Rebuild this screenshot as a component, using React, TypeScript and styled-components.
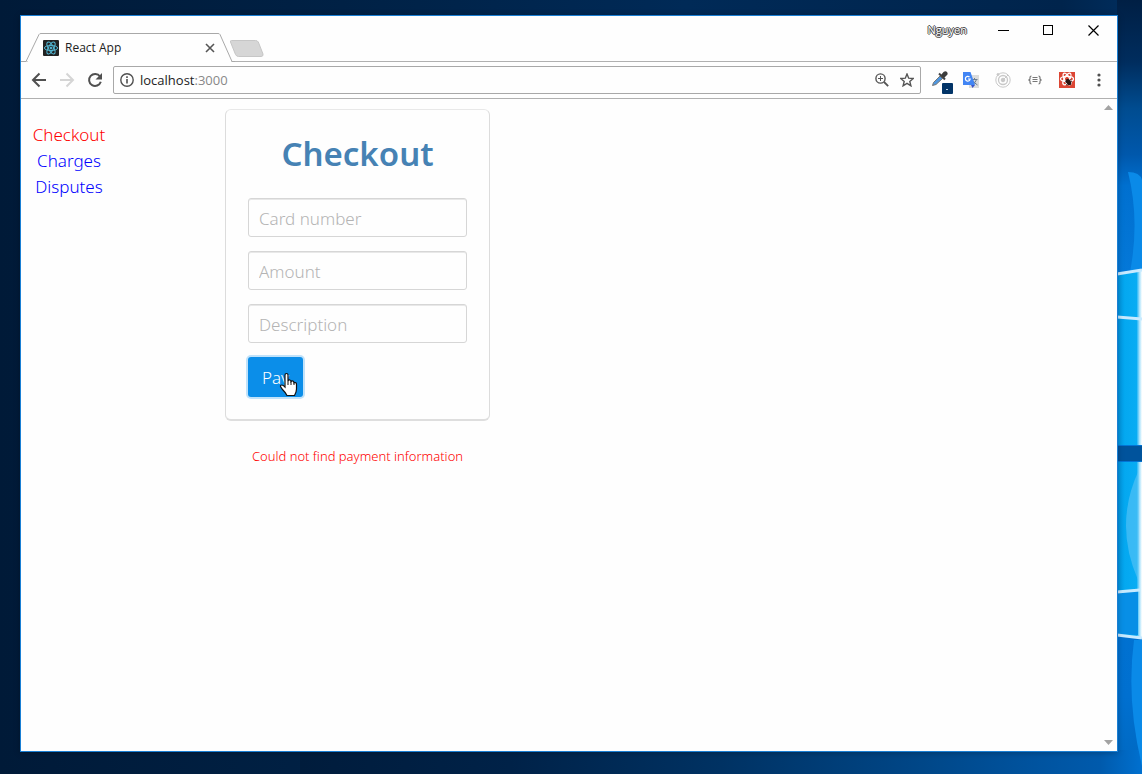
import React from "react";
import styled, { createGlobalStyle, css } from "styled-components";

const uiFont = `"Noto Sans", "Open Sans", sans-serif`;

const GlobalStyle = createGlobalStyle`
  *, *::before, *::after { box-sizing: border-box; }
  html, body, #root { height: 100%; margin: 0; }
  body { font-family: ${uiFont}; overflow: hidden; }
`;

const Desktop = styled.div`
  position: relative;
  min-height: 100vh;
  display: flex;
  padding: 15px 24px 22px 20px;
  background: linear-gradient(90deg, #001a38 0%, #002145 30%, #002a57 60%, #00244c 93%, #002f60 100%);
`;

const Wallpaper = styled.svg`
  position: absolute;
  right: 0;
  top: 0;
  height: 100%;
  width: 842px;
`;

const BrowserWindow = styled.main`
  position: relative;
  flex: 1;
  min-width: 0;
  display: flex;
  flex-direction: column;
  background: #fefefe;
  border: 1px solid #1a7fd4;
  box-shadow: 0 1px 6px rgba(0, 0, 0, 0.25);
`;

const TabStrip = styled.header`
  display: flex;
  align-items: flex-end;
  height: 46px;
  box-shadow: inset 0 -1px #b0b0b0;
`;

const Tab = styled.div`
  position: relative;
  display: flex;
  align-items: center;
  width: 214px;
  height: 29px;
  padding: 0 19px 0 22px;
`;

const TabShape = styled.svg`
  position: absolute;
  inset: 0;
`;

const Favicon = styled.svg`
  position: relative;
  flex: none;
`;

const TabTitle = styled.span`
  position: relative;
  flex: 1;
  padding-left: 6px;
  font: 12px/16px "Open Sans", sans-serif;
  color: #222;
`;

const PlainButton = styled.button`
  position: relative;
  flex: none;
  display: flex;
  align-items: center;
  justify-content: center;
  padding: 0;
  border: 0;
  background: none;
  cursor: pointer;
`;

const NewTabButton = styled(PlainButton)`
  align-self: flex-end;
  margin: 0 0 4px -6px;
`;

const WindowControls = styled.div`
  align-self: flex-start;
  display: flex;
  align-items: center;
  height: 28px;
  margin: 0 1px 0 auto;
`;

const UserName = styled.span`
  padding-right: 14px;
  font: 11px/14px "Open Sans", sans-serif;
  color: #fff;
  text-shadow: 1px 0 #444, -1px 0 #444, 0 1px #444, 0 -1px #444;
`;

const WindowButton = styled(PlainButton)`
  width: 45px;
  height: 28px;
`;

const Toolbar = styled.nav`
  display: flex;
  align-items: center;
  height: 37px;
  padding: 0 2px 0 4px;
  border-bottom: 1px solid #b0b0b0;
`;

const ToolButton = styled(PlainButton)`
  width: 28px;
  height: 28px;
`;

const AddressBar = styled.div`
  flex: 1;
  min-width: 0;
  display: flex;
  align-items: center;
  height: 28px;
  margin: 0 2px 0 4px;
  padding: 0 1px 0 6px;
  border: 1px solid #a8a8a8;
  border-radius: 2px;
`;

const Address = styled.span`
  flex: 1;
  padding-left: 6px;
  font: 13px/18px "Open Sans", sans-serif;
  color: #888;
`;

const Host = styled.span`
  color: #222;
`;

const AddressButton = styled(PlainButton)`
  width: 25px;
  height: 24px;
`;

const ExtensionButton = styled(PlainButton)`
  width: 32px;
  height: 28px;
`;

const Page = styled.div`
  flex: 1;
  display: flex;
  align-items: flex-start;
`;

const SideNav = styled.nav`
  display: flex;
  flex-direction: column;
  align-items: center;
  width: 96px;
  padding-top: 23px;
`;

const NavLink = styled.a<{ $active?: boolean }>`
  font-size: 17px;
  font-weight: 300;
  line-height: 26px;
  text-decoration: none;
  color: ${(p) => (p.$active ? "#f00" : "#00f")};
`;

const Content = styled.section`
  display: flex;
  flex-direction: column;
  align-items: center;
  margin-left: 108px;
  padding-top: 10px;
`;

const CheckoutForm = styled.form`
  display: flex;
  flex-direction: column;
  align-items: stretch;
  gap: 14px;
  width: 265px;
  padding: 20px 22px 22px;
  border: 1px solid #dcdcdc;
  border-top-color: #e8e8e8;
  border-bottom: 2px solid #dedede;
  border-radius: 6px;
`;

const Title = styled.h1`
  margin: 0 0 6px;
  font-size: 33px;
  font-weight: 600;
  line-height: 48px;
  text-align: center;
  color: #4682b4;
`;

const control = css`
  height: 39px;
  border-radius: 3px;
  font-family: ${uiFont};
  font-size: 17px;
  font-weight: 300;
`;

const Field = styled.input`
  ${control}
  width: 100%;
  padding: 1px 10px 0;
  border: 1px solid #d6d6d6;
  background: #fefefe;
  box-shadow: inset 0 1px #e8e8e8;
  outline: none;
  &::placeholder { color: #b4b4b4; opacity: 1; }
`;

const PayButton = styled.button`
  ${control}
  align-self: flex-start;
  height: 40px;
  padding: 1px 14px 0;
  border: 0;
  background: #0b8ee9;
  box-shadow: 0 0 0 2px #c0e2fa;
  color: #fff;
  cursor: pointer;
`;

const ErrorMessage = styled.p`
  margin: 26px 0 0;
  font-size: 13px;
  font-weight: 300;
  line-height: 18px;
  color: #f00;
`;

const ScrollRail = styled.div`
  align-self: stretch;
  display: flex;
  flex-direction: column;
  justify-content: space-between;
  width: 17px;
  margin-left: auto;
  padding: 6px 4px;
`;

const PayArea = styled.div`
  position: relative;
  display: flex;
`;

const Cursor = styled.svg`
  position: absolute;
  left: 31px;
  top: 15px;
  pointer-events: none;
`;

const ReactMark = ({ color }: { color: string }) => (
  <g fill="none" stroke={color} strokeWidth="1">
    <ellipse cx="8" cy="8" rx="6.6" ry="2.6" />
    <ellipse cx="8" cy="8" rx="6.6" ry="2.6" transform="rotate(60 8 8)" />
    <ellipse cx="8" cy="8" rx="6.6" ry="2.6" transform="rotate(120 8 8)" />
    <circle cx="8" cy="8" r="1" fill={color} />
  </g>
);

const DesktopArt = () => (
  <Wallpaper viewBox="0 0 842 774" preserveAspectRatio="none" aria-hidden="true">
    <defs>
      <linearGradient id="sky" x1="0" y1="0" x2="0" y2="1">
        <stop offset="0" stopColor="#001f44" />
        <stop offset="0.08" stopColor="#002d5e" />
        <stop offset="0.14" stopColor="#004c90" />
        <stop offset="0.2" stopColor="#0058ac" />
        <stop offset="0.24" stopColor="#0070d0" />
        <stop offset="0.35" stopColor="#0478d8" />
        <stop offset="0.9" stopColor="#0070d0" />
        <stop offset="1" stopColor="#0068c0" />
      </linearGradient>
      <linearGradient id="floor" x1="0" y1="0" x2="1" y2="0">
        <stop offset="0" stopColor="#001c3c" />
        <stop offset="0.25" stopColor="#002248" />
        <stop offset="0.5" stopColor="#003263" />
        <stop offset="0.75" stopColor="#00488a" />
        <stop offset="0.95" stopColor="#005aac" />
        <stop offset="1" stopColor="#0070cf" />
      </linearGradient>
      <linearGradient id="pane" x1="0" y1="0" x2="1" y2="0">
        <stop offset="0" stopColor="#0290dc" />
        <stop offset="0.3" stopColor="#04a8f0" />
        <stop offset="0.78" stopColor="#08acf3" />
        <stop offset="0.9" stopColor="#a8e2fc" />
        <stop offset="1" stopColor="#fff" />
      </linearGradient>
    </defs>
    <rect x="817" width="25" height="774" fill="url(#sky)" />
    <rect y="750" width="842" height="24" fill="url(#floor)" />
    <path d="M828 172Q840 172 842 180V270L830 272Q840 220 828 172Z" fill="#0a8ae8" />
    <path d="M834 640H842V766Q826 700 834 640Z" fill="#0a8ae8" />
    <path d="M817 274L842 269V445H817Z" fill="url(#pane)" />
    <path d="M817 462H842V638L817 635Z" fill="url(#pane)" />
    <path d="M838 472Q814 525 838 580Z" fill="#5cc4f6" opacity=".6" />
    <path d="M817 593L838 591V635L817 634Z" fill="#088fe6" />
    <path d="M817 274L842 270M817 317L842 319M817 592L840 590M817 635L842 638" stroke="#c8eaff" strokeWidth="3" />
    <rect x="817" y="446" width="25" height="15" fill="#00539c" />
  </Wallpaper>
);

export default function App() {
  return (
    <Desktop>
      <GlobalStyle />
      <DesktopArt />
      <BrowserWindow>
        <TabStrip>
          <Tab>
            <TabShape width="214" height="29" viewBox="0 0 214 29">
              <path d="M0 28.5H5L18 1.5Q18.500 .5 20 .5H197Q198.500 .5 199 1.500L211 28.500H214" fill="#fefefe" stroke="#a8a8a8" />
              <path d="M7 28.500H210" stroke="#fefefe" />
            </TabShape>
            <Favicon width="16" height="16" viewBox="0 0 16 16">
              <rect width="16" height="16" rx="1" fill="#222" />
              <ReactMark color="#53b8d4" />
            </Favicon>
            <TabTitle>React App</TabTitle>
            <PlainButton aria-label="Close tab">
              <svg width="12" height="12" viewBox="0 0 12 12"><path d="M2 2L10 10M10 2L2 10" stroke="#555" strokeWidth="1.600" /></svg>
            </PlainButton>
          </Tab>
          <NewTabButton aria-label="New tab">
            <svg width="36" height="19" viewBox="0 0 36 19"><path d="M2.500 1.500H26.500Q28.500 1.500 29.300 3L34 15Q34.500 17.500 32 17.500H9.500Q7.500 17.500 6.500 15.500L1.500 3Q1 1.500 2.500 1.500Z" fill="#d6d6d6" stroke="#c6c6c6" /></svg>
          </NewTabButton>
          <WindowControls>
            <UserName>Nguyen</UserName>
            <WindowButton aria-label="Minimize">
              <svg width="11" height="11"><path d="M0 5.500H11" stroke="#000" /></svg>
            </WindowButton>
            <WindowButton aria-label="Maximize">
              <svg width="11" height="11"><rect x=".5" y=".5" width="9" height="9" fill="none" stroke="#000" /></svg>
            </WindowButton>
            <WindowButton aria-label="Close">
              <svg width="11" height="11"><path d="M.5 .5L10.500 10.500M10.500 .5L.5 10.500" stroke="#000" strokeWidth="1.200" /></svg>
            </WindowButton>
          </WindowControls>
        </TabStrip>
        <Toolbar aria-label="Browser">
          <ToolButton aria-label="Back">
            <svg width="16" height="16" viewBox="0 0 16 16"><path d="M15 8H2M8.500 1.500L2 8L8.500 14.500" fill="none" stroke="#505050" strokeWidth="2" /></svg>
          </ToolButton>
          <ToolButton aria-label="Forward">
            <svg width="16" height="16" viewBox="0 0 16 16"><path d="M1 8H14M7.500 1.500L14 8L7.500 14.500" fill="none" stroke="#d5d5d5" strokeWidth="2" /></svg>
          </ToolButton>
          <ToolButton aria-label="Reload">
            <svg width="16" height="16" viewBox="0 0 16 16"><path d="M13 4.500A6 6 0 1 0 13.800 9.800" fill="none" stroke="#505050" strokeWidth="2" /><path d="M15 1V7.500H8.500Z" fill="#505050" /></svg>
          </ToolButton>
          <AddressBar>
            <svg width="14" height="14" viewBox="0 0 14 14"><circle cx="7" cy="7" r="6.200" fill="none" stroke="#505050" strokeWidth="1.400" /><path d="M7 6V10.500M7 3.300V5" stroke="#505050" strokeWidth="1.600" /></svg>
            <Address><Host>localhost</Host>:3000</Address>
            <AddressButton aria-label="Zoom">
              <svg width="14" height="14" viewBox="0 0 14 14"><circle cx="5.500" cy="5.500" r="4.600" fill="none" stroke="#555" strokeWidth="1.400" /><path d="M9 9L13.200 13.200" stroke="#555" strokeWidth="1.800" /><path d="M3 5.500H8M5.500 3V8" stroke="#555" /></svg>
            </AddressButton>
            <AddressButton aria-label="Bookmark">
              <svg width="14" height="14" viewBox="0 0 14 14"><path d="M7 1L8.700 5.200L13.200 5.500L9.800 8.400L10.900 12.800L7 10.400L3.100 12.800L4.200 8.400L.8 5.500L5.300 5.200Z" fill="none" stroke="#555" strokeWidth="1.400" /></svg>
            </AddressButton>
          </AddressBar>
          <ExtensionButton aria-label="Color picker">
            <svg width="30" height="28" viewBox="-6 -4 30 28">
              <path d="M2.500 15.500L3.500 12.500L10 6L12.500 8.500L6 14.500Z" fill="#4f97e0" stroke="#777" />
              <path d="M9 3.500L15 9.500" stroke="#444" strokeWidth="2" />
              <path d="M11 5L13.500 2Q15.500 .5 17 2Q18.500 4 16.500 5.500L14 8Z" fill="#3c3c3c" />
              <rect x="12" y="13" width="11" height="11" rx="1" fill="#023467" />
              <path d="M16 19.500H18" stroke="#b8cce0" />
            </svg>
          </ExtensionButton>
          <ExtensionButton aria-label="Translate">
            <svg width="16" height="16" viewBox="0 0 16 16">
              <rect x="6" y="3" width="10" height="13" fill="#dcdcdc" />
              <path d="M8.500 7.500H14.500M11.500 6V7.500M13.500 7.500Q12.500 11 9.500 12.500M10 8.500Q11 11 14.500 13" fill="none" stroke="#6a7d90" />
              <path d="M8 13H12L9.500 16Z" fill="#3a55c8" />
              <path d="M0 0H7.500L12 13H0Z" fill="#4285f4" />
              <path d="M6.500 5A2.400 2.400 0 1 0 7.200 7H5" fill="none" stroke="#fff" strokeWidth="1.200" />
            </svg>
          </ExtensionButton>
          <ExtensionButton aria-label="Tracker">
            <svg width="16" height="16" viewBox="0 0 16 16" fill="none" stroke="#c8c8c8"><circle cx="8" cy="8" r="7.200" /><circle cx="8" cy="8" r="4.500" strokeWidth="1.300" /><circle cx="8" cy="8" r="1.800" fill="#c8c8c8" /><circle cx="3" cy="2.500" r="1" fill="#c8c8c8" /><path d="M8 8L13 3" /></svg>
          </ExtensionButton>
          <ExtensionButton aria-label="JSON viewer">
            <svg width="14" height="10" viewBox="0 0 14 10" fill="none" stroke="#777"><path d="M3.500 1Q2 1 2 2.500V4L.8 5L2 6V7.500Q2 9 3.500 9M10.500 1Q12 1 12 2.500V4L13.200 5L12 6V7.500Q12 9 10.500 9" strokeWidth="1.200" /><path d="M4.500 2.500H9.500M4.500 4.500H9.500M4.500 6.500H9.500" /></svg>
          </ExtensionButton>
          <ExtensionButton aria-label="React developer tools">
            <svg width="16" height="16" viewBox="0 0 16 16">
              <rect width="16" height="16" fill="#dc4634" />
              <g fill="none" stroke="#fff" strokeWidth="1.300">
                <ellipse cx="8" cy="7" rx="6.500" ry="2.600" />
                <ellipse cx="8" cy="7" rx="6.500" ry="2.600" transform="rotate(60 8 7)" />
                <ellipse cx="8" cy="7" rx="6.500" ry="2.600" transform="rotate(120 8 7)" />
              </g>
              <ellipse cx="9.500" cy="10" rx="2.200" ry="3.500" fill="#2a1512" transform="rotate(-35 9.500 10)" />
              <path d="M6 9.500L12 13M7 13L13 9M9 13.500L11.500 7" stroke="#2a1512" strokeWidth=".8" />
            </svg>
          </ExtensionButton>
          <ExtensionButton aria-label="Menu">
            <svg width="4" height="14" viewBox="0 0 4 14" fill="#505050"><circle cx="2" cy="2" r="1.600" /><circle cx="2" cy="7" r="1.600" /><circle cx="2" cy="12" r="1.600" /></svg>
          </ExtensionButton>
        </Toolbar>
        <Page>
          <SideNav aria-label="Sections">
            <NavLink href="#checkout" $active>Checkout</NavLink>
            <NavLink href="#charges">Charges</NavLink>
            <NavLink href="#disputes">Disputes</NavLink>
          </SideNav>
          <Content>
            <CheckoutForm onSubmit={(e) => e.preventDefault()}>
              <Title>Checkout</Title>
              <Field aria-label="Card number" placeholder="Card number" />
              <Field aria-label="Amount" placeholder="Amount" />
              <Field aria-label="Description" placeholder="Description" />
              <PayArea>
                <PayButton type="submit">Pay</PayButton>
                <Cursor width="20" height="26" viewBox="0 0 20 26" aria-hidden="true">
                  <path d="M6 15V3Q6 1.500 7.500 1.500Q9 1.500 9 3V9Q9.500 7.500 11 8Q12 8.300 12 9.500Q13 8.500 14.300 9.300Q15 9.800 15 10.800Q17.500 9.800 17.500 12.500V17Q17.500 20 15.500 23.500H8Q6.500 20.500 3.500 17.500L1.500 14.500Q1.300 13 2.800 13Q4.200 13 6 15Z" fill="#fff" stroke="#111" strokeWidth="1.200" />
                  <path d="M9 9V13M12 9.500V13M15 10.500V13" stroke="#111" />
                </Cursor>
              </PayArea>
            </CheckoutForm>
            <ErrorMessage role="alert">Could not find payment information</ErrorMessage>
          </Content>
          <ScrollRail aria-hidden="true">
            <svg width="9" height="5"><path d="M0 5L4.500 0L9 5Z" fill="#a3a3a3" /></svg>
            <svg width="9" height="5"><path d="M0 0L4.500 5L9 0Z" fill="#a3a3a3" /></svg>
          </ScrollRail>
        </Page>
      </BrowserWindow>
    </Desktop>
  );
}
